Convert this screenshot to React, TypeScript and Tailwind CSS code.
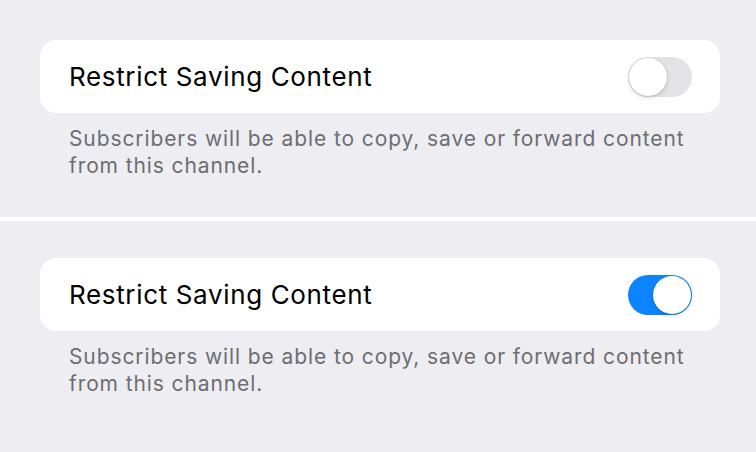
import { useState } from 'react';

// ─── iOS-style switch ──────────────────────────────────────────────────────────
function Switch({ on }: Readonly<{ on: boolean }>) {
  return (
    <div
      className={`relative h-[40px] w-[64px] shrink-0 rounded-full ${on ? 'bg-[#0c84ff]' : 'bg-[#e3e3e6]'}`}
    >
      <div
        className={`absolute top-[1px] h-[38px] w-[38px] rounded-full bg-white shadow-[0_0_0_1px_rgba(0,0,0,0.06),0_2px_4px_rgba(0,0,0,0.12)] ${on ? 'left-[25px]' : 'left-[1px]'}`}
      />
    </div>
  );
}

// ─── One settings section: card + footer ───────────────────────────────────────
function Section({ on }: Readonly<{ on: boolean }>) {
  return (
    <div className="ml-[40px] mr-[36px]">
      <div className="flex h-[73px] items-center justify-between rounded-[16px] bg-white pl-[29px] pr-[28px]">
        <span className="text-[26px] tracking-[0.65px] text-black">Restrict Saving Content</span>
        <Switch on={on} />
      </div>
      <p className="mt-[12px] pl-[29px] pr-[20px] text-[21px] leading-[27px] tracking-[0.9px] text-[#6d6d72]">
        Subscribers will be able to copy, save or forward content from this channel.
      </p>
    </div>
  );
}

export default function App() {
  const [states] = useState([false, true]);
  return (
    <div className="h-[452px] w-[756px] overflow-hidden bg-[#ededf2] font-['Inter',sans-serif]">
      <div className="pt-[40px] pb-[38px]">
        <Section on={states[0]} />
      </div>
      <div className="h-[4px] bg-white" />
      <div className="pt-[37px]">
        <Section on={states[1]} />
      </div>
    </div>
  );
}
